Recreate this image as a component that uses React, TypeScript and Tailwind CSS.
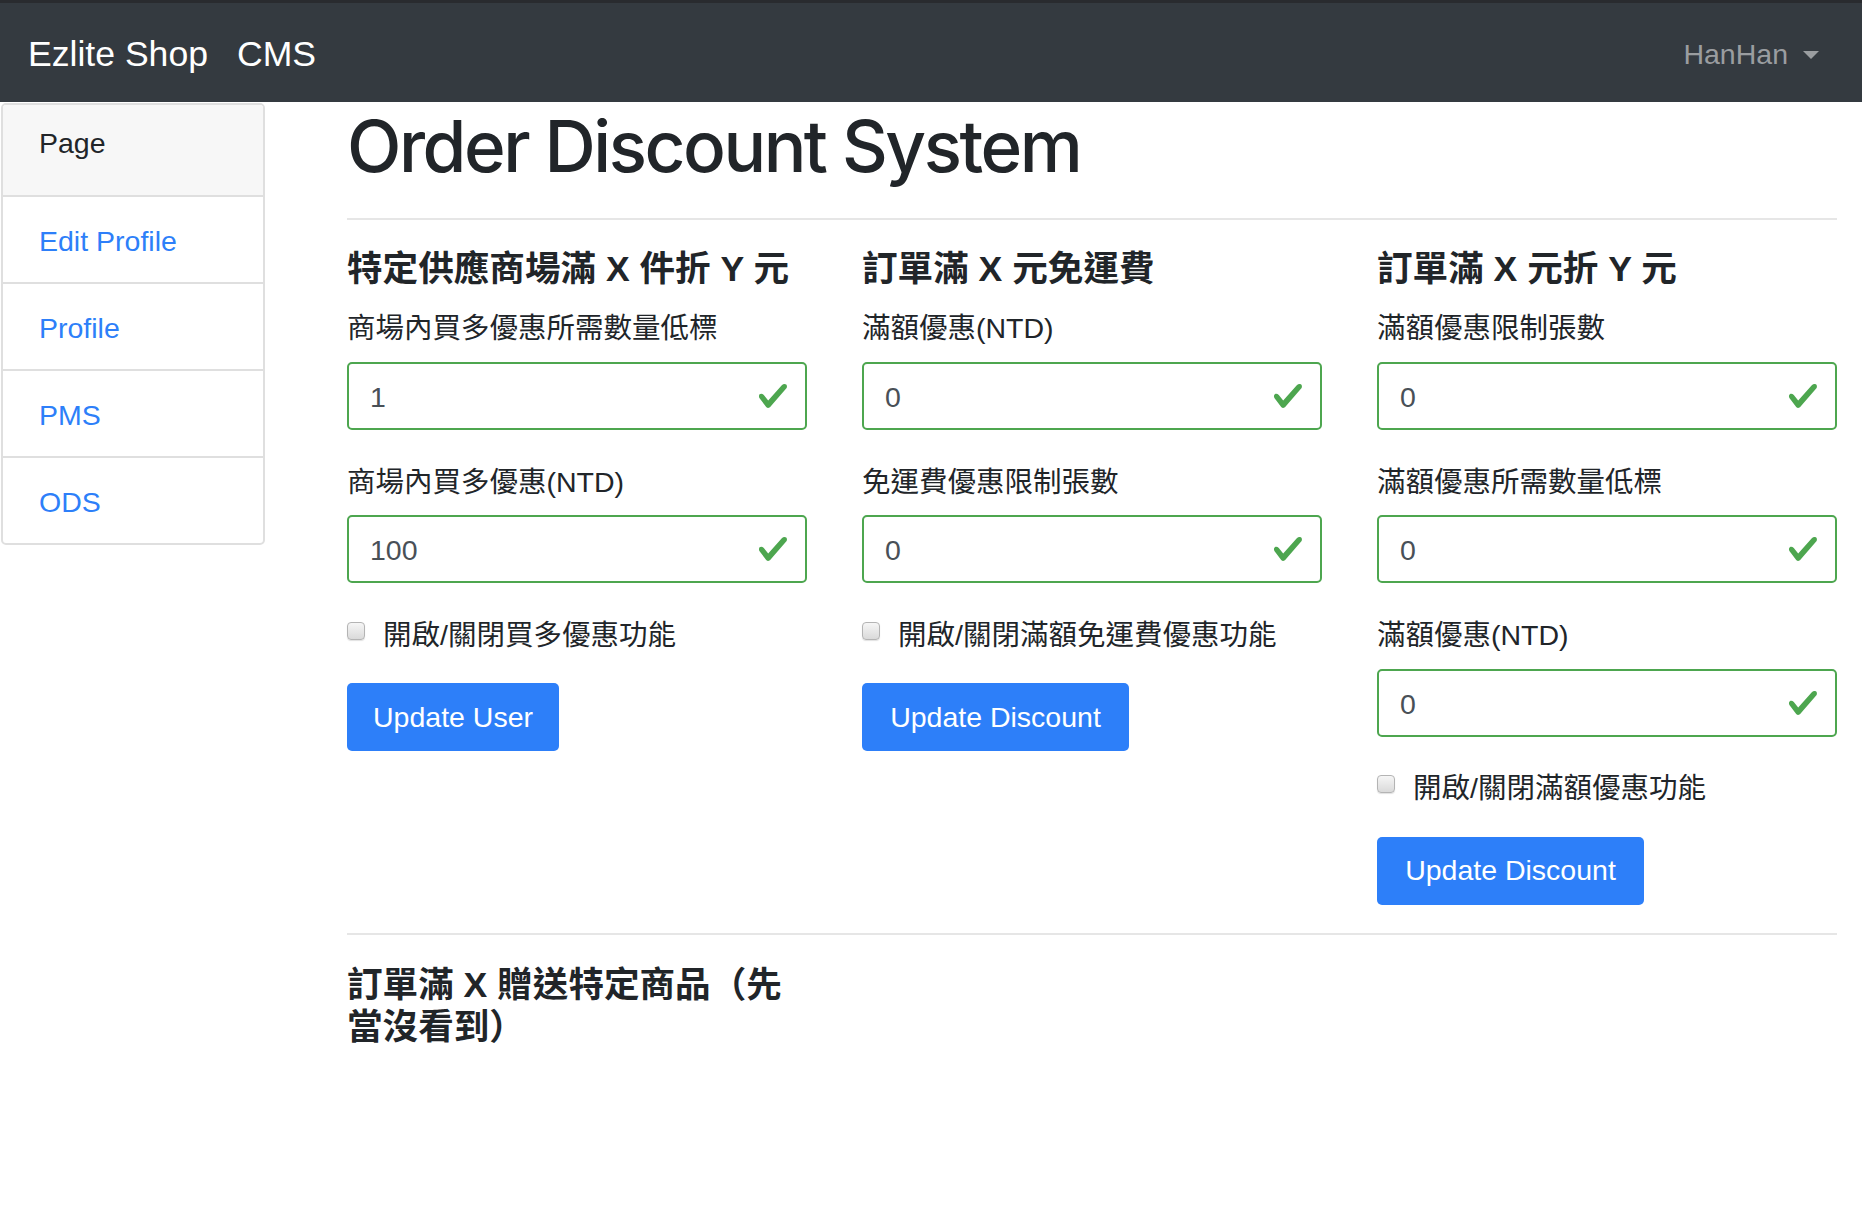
import React from "react";

const base = "font-['Liberation_Sans','Noto_Sans_CJK_TC',sans-serif]";

function CheckIcon() {
  return (
    <svg width="32" height="32" viewBox="0 0 8 8" className="shrink-0">
      <path
        fill="#4da64f"
        d="M2.3 6.73L.6 4.53c-.4-1.04.46-1.4 1.1-.8l1.1 1.4 3.4-3.8c.6-.63 1.6-.27 1.2.7l-4 4.6c-.43.5-.8.4-1.1.1z"
      />
    </svg>
  );
}

function Field({ label, value }: { label: string; value: string }) {
  return (
    <div className="mb-[28.5px]">
      <div className="h-[42.75px] pt-[4px] leading-[38.75px] mb-[14.2px]">{label}</div>
      <div className="flex items-center h-[68px] border-2 border-[#4da64f] rounded-[5px] pl-[21px] pr-[16px]">
        <span className="flex-1 text-[#495057] pt-[2px]">{value}</span>
        <CheckIcon />
      </div>
    </div>
  );
}

function Toggle({ label }: { label: string }) {
  return (
    <div className="mb-[28.5px] flex items-start h-[42.75px]">
      <span className="mt-[10px] w-[18px] h-[18px] shrink-0 rounded-[4px] border border-[#b4b4b4] bg-gradient-to-b from-[#f6f6f6] to-[#dadada] shadow-[0_1px_1px_rgba(0,0,0,0.12)]" />
      <span className="ml-[18px] h-[42.75px] pt-[4px] leading-[38.75px]">{label}</span>
    </div>
  );
}

function Heading({ children }: { children: React.ReactNode }) {
  return (
    <h5 className="text-[35.6px] font-bold leading-[42.7px] mb-[14.2px] text-[#212529]">
      {children}
    </h5>
  );
}

function Button({ children, width }: { children: React.ReactNode; width: string }) {
  return (
    <button className={`h-[68px] ${width} rounded-[5px] bg-[#2d7ff9] text-white text-[28.5px]`}>
      {children}
    </button>
  );
}

const sideLinks = ["Edit Profile", "Profile", "PMS", "ODS"];

export default function App() {
  return (
    <div className={`min-h-screen bg-white text-[#212529] text-[28.5px] ${base}`}>
      <nav className="h-[102px] bg-[#343a40] border-t-[3px] border-[#292b2f] flex items-center justify-between pl-[28px] pr-[43px] pt-[4px]">
        <div className="flex items-center gap-[29px] text-white text-[35.6px]">
          <span>Ezlite Shop</span>
          <span>CMS</span>
        </div>
        <div className="flex items-center text-[#9a9da0] text-[28.5px]">
          <span>HanHan</span>
          <span className="ml-[15px] w-0 h-0 border-t-[8.5px] border-x-[8.5px] border-x-transparent border-t-[#9a9da0]" />
        </div>
      </nav>

      <div className="flex items-start">
        <aside className="w-[264px] ml-[1px] mt-[1px] border-2 border-[#dfdfdf] rounded-[5px] overflow-hidden">
          <div className="h-[92px] bg-[#f7f7f7] border-b-2 border-[#dfdfdf] pl-[36px] pt-[17px] leading-[43px]">
            Page
          </div>
          {sideLinks.map((l, i) => (
            <div
              key={l}
              className={
                i < sideLinks.length - 1
                  ? "h-[87px] border-b-2 border-[#dfdfdf] pl-[36px] pt-[3px] flex items-center text-[#2d7ff9]"
                  : "h-[85px] pl-[36px] pt-[3px] flex items-center text-[#2d7ff9]"
              }
            >
              {l}
            </div>
          ))}
        </aside>

        <main className="ml-[82px] w-[1490px] pt-[8.7px]">
          <h1 className="font-['Inter',sans-serif] font-medium text-[71px] leading-[71px] tracking-[-0.035em] mb-[36px]">
            Order Discount System
          </h1>
          <div className="h-[2px] bg-[#e6e6e6] mb-[28.5px]" />

          <div className="grid grid-cols-3 gap-x-[55px] items-start">
            <div>
              <Heading>特定供應商場滿 X 件折 Y 元</Heading>
              <Field label="商場內買多優惠所需數量低標" value="1" />
              <Field label="商場內買多優惠(NTD)" value="100" />
              <Toggle label="開啟/關閉買多優惠功能" />
              <Button width="w-[212px]">Update User</Button>
            </div>
            <div>
              <Heading>訂單滿 X 元免運費</Heading>
              <Field label="滿額優惠(NTD)" value="0" />
              <Field label="免運費優惠限制張數" value="0" />
              <Toggle label="開啟/關閉滿額免運費優惠功能" />
              <Button width="w-[267px]">Update Discount</Button>
            </div>
            <div>
              <Heading>訂單滿 X 元折 Y 元</Heading>
              <Field label="滿額優惠限制張數" value="0" />
              <Field label="滿額優惠所需數量低標" value="0" />
              <Field label="滿額優惠(NTD)" value="0" />
              <Toggle label="開啟/關閉滿額優惠功能" />
              <Button width="w-[267px]">Update Discount</Button>
            </div>
          </div>

          <div className="h-[2px] bg-[#e6e6e6] mt-[28.5px] mb-[28.5px]" />

          <div className="grid grid-cols-3 gap-x-[55px]">
            <div>
              <Heading>訂單滿 X 贈送特定商品（先當沒看到）</Heading>
            </div>
          </div>
        </main>
      </div>
    </div>
  );
}
